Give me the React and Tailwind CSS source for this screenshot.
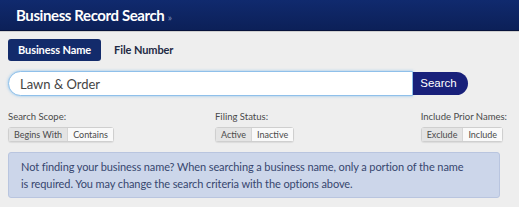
import React, { useState } from 'react';

const OPTION_GROUPS = [
  { label: 'Search Scope:', options: ['Begins With', 'Contains'] },
  { label: 'Filing Status:', options: ['Active', 'Inactive'] },
  { label: 'Include Prior Names:', options: ['Exclude', 'Include'] },
];

function ToggleGroup({ label, options, className = '' }) {
  const [active, setActive] = useState(0);
  return (
    <div className={className}>
      <p className="text-[9.5px] leading-[12px] text-[#4a4a4a]">{label}</p>
      <div className="mt-[4px] flex w-fit rounded-[3px] border border-[#cfcfcf] bg-white shadow-[0_1px_1px_rgba(0,0,0,0.08)]">
        {options.map((opt, i) => (
          <button
            key={opt}
            onClick={() => setActive(i)}
            className={`h-[13px] px-[5px] text-[9px] leading-[13px] text-[#4a4a4a] ${
              i > 0 ? 'border-l border-[#d6d6d6]' : ''
            } ${active === i ? 'bg-[#e4e4e4]' : 'bg-[#f9f9f9]'}`}
          >
            {opt}
          </button>
        ))}
      </div>
    </div>
  );
}

export default function App() {
  const [tab, setTab] = useState('name');
  const [query, setQuery] = useState('Lawn & Order');

  return (
    <div className="w-[519px] h-[207px] bg-[#eeeeee] font-['Lato',sans-serif] overflow-hidden">
      {/* Header */}
      <div className="h-[31px] bg-gradient-to-b from-[#102a6e] to-[#0c2058] border-b border-[#06123a] flex items-center px-4">
        <h1 className="text-[15px] font-bold text-white tracking-[-0.4px]">
          Business Record Search <span className="text-[10px] text-[#7d8fb8] font-normal">»</span>
        </h1>
      </div>
      <div className="h-px bg-[#cfcfcf]" />

      <div className="px-2">
        {/* Tabs */}
        <div className="mt-[7px] flex items-center gap-[13px]">
          <button
            onClick={() => setTab('name')}
            className={`h-[22px] px-[10px] rounded-[3px] text-[11px] font-bold tracking-[-0.1px] ${
              tab === 'name' ? 'bg-[#132b6b] text-white' : 'text-[#1e2a44]'
            }`}
          >
            Business Name
          </button>
          <button
            onClick={() => setTab('file')}
            className={`h-[22px] px-[0px] rounded-[3px] text-[11px] font-bold tracking-[-0.1px] ${
              tab === 'file' ? 'bg-[#132b6b] text-white px-[10px]' : 'text-[#1e2a44]'
            }`}
          >
            File Number
          </button>
        </div>

        {/* Search input */}
        <div className="mt-[10px] flex items-center">
          <input
            value={query}
            onChange={e => setQuery(e.target.value)}
            className="w-[405px] h-[25px] rounded-l-full bg-white border border-[#8fc0ea] shadow-[0_0_3px_rgba(82,168,236,0.6)] pl-[11px] text-[13px] text-[#444] focus:outline-none"
          />
          <button className="w-[55px] h-[23px] rounded-r-full bg-[#18207a] text-white text-[11.5px] font-['Liberation_Sans',sans-serif] pr-[4px]">
            Search
          </button>
        </div>

        {/* Options */}
        <div className="mt-[15px] flex items-start">
          <ToggleGroup {...OPTION_GROUPS[0]} className="w-[207px]" />
          <ToggleGroup {...OPTION_GROUPS[1]} />
          <ToggleGroup {...OPTION_GROUPS[2]} className="ml-auto mr-[4px]" />
        </div>

        {/* Info */}
        <div className="mt-[10px] w-[492px] rounded-[3px] border border-[#b9c5df] bg-[#ccd6ea] pl-[12px] pr-[32px] py-[5px] text-[11px] leading-[17px] tracking-[-0.1px] text-[#37466f]">
          Not finding your business name? When searching a business name, only a portion of the name is required. You may change the search criteria with the options above.
        </div>
      </div>
    </div>
  );
}
